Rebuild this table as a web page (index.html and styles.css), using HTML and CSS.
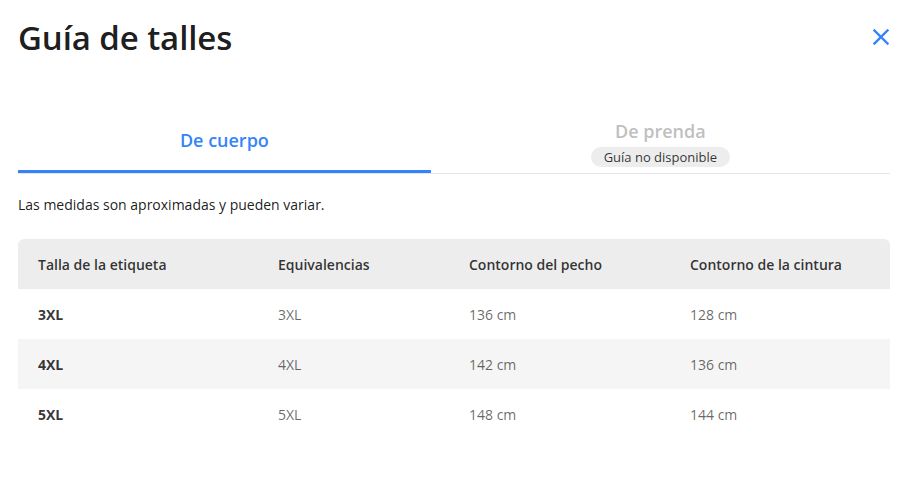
FILE: index.html
```html
<!DOCTYPE html>
<html lang="es">
<head>
<meta charset="utf-8">
<title>Guía de talles</title>
<link rel="stylesheet" href="styles.css">
</head>
<body>
<div class="modal">
  <header class="modal-head">
    <h1 class="title">Guía de talles</h1>
    <button class="close" aria-label="Cerrar">
      <svg width="16" height="16" viewBox="0 0 16 16"><path d="M1.5 1.5 L14.5 14.5 M14.5 1.5 L1.5 14.5" stroke="#3483fa" stroke-width="2.4" fill="none" stroke-linecap="square"/></svg>
    </button>
  </header>
  <nav class="tabs">
    <div class="tab tab-active"><span class="tab-label">De cuerpo</span></div>
    <div class="tab tab-disabled"><span class="tab-label">De prenda</span><span class="badge">Guía no disponible</span></div>
  </nav>
  <p class="note">Las medidas son aproximadas y pueden variar.</p>
  <table class="sizes">
    <colgroup><col class="c1"><col class="c2"><col class="c3"><col class="c4"></colgroup>
    <thead>
      <tr><th>Talla de la etiqueta</th><th>Equivalencias</th><th>Contorno del pecho</th><th>Contorno de la cintura</th></tr>
    </thead>
    <tbody>
      <tr><td class="size">3XL</td><td>3XL</td><td>136 cm</td><td>128 cm</td></tr>
      <tr><td class="size">4XL</td><td>4XL</td><td>142 cm</td><td>136 cm</td></tr>
      <tr><td class="size">5XL</td><td>5XL</td><td>148 cm</td><td>144 cm</td></tr>
    </tbody>
  </table>
</div>
</body>
</html>
```
FILE: styles.css
```css
* { box-sizing: border-box; }
html, body { margin: 0; background: #fff; }
body { font-family: "Open Sans", "Noto Sans", sans-serif; color: rgba(0,0,0,.9); }
.modal { width: 921px; padding: 0 31px 0 18px; }
.modal-head { display: flex; justify-content: space-between; align-items: flex-start; height: 80px; }
.title { margin: 0; padding-top: 18px; font-size: 33px; line-height: 40px; font-weight: 600; letter-spacing: -0.1px; }
.close { border: 0; background: none; padding: 0; width: 16px; height: 16px; margin: 29px 1px 0 0; display: block; cursor: pointer; }
.close svg { display: block; }
.tabs { display: flex; margin-top: 38px; border-bottom: 1px solid #e6e6e6; }
.tab { flex: 1 1 auto; display: flex; flex-direction: column; align-items: center; height: 55px; }
.tab-label { font-size: 18px; font-weight: 600; line-height: 22px; }
.tab-active { border-bottom: 3px solid #3483fa; color: #3483fa; padding: 11px 2px 0; }
.tab-disabled { color: #bfbfbf; padding-top: 2px; }
.badge { margin-top: 5px; background: #ededed; color: rgba(0,0,0,.8); font-size: 13px; font-weight: 400; line-height: 20px; padding: 0 13px; border-radius: 10px; }
.note { margin: 22px 0 0; font-size: 14px; line-height: 18px; color: rgba(0,0,0,.9); }
.sizes { margin-top: 25px; width: 872px; border-collapse: separate; border-spacing: 0; table-layout: fixed; font-size: 14px; }
.c1 { width: 240px; } .c2 { width: 191px; } .c3 { width: 221px; } .c4 { width: 220px; }
.sizes th, .sizes td { text-align: left; padding: 0 20px; height: 50px; }
.sizes th { background: #ededed; font-weight: 600; color: rgba(0,0,0,.8); }
.sizes th:first-child { border-top-left-radius: 6px; }
.sizes th:last-child { border-top-right-radius: 6px; }
.sizes td { color: rgba(0,0,0,.6); }
.sizes td.size { font-weight: 700; color: rgba(0,0,0,.8); }
.sizes tbody tr:nth-child(2) td { background: #f5f5f5; }
```
